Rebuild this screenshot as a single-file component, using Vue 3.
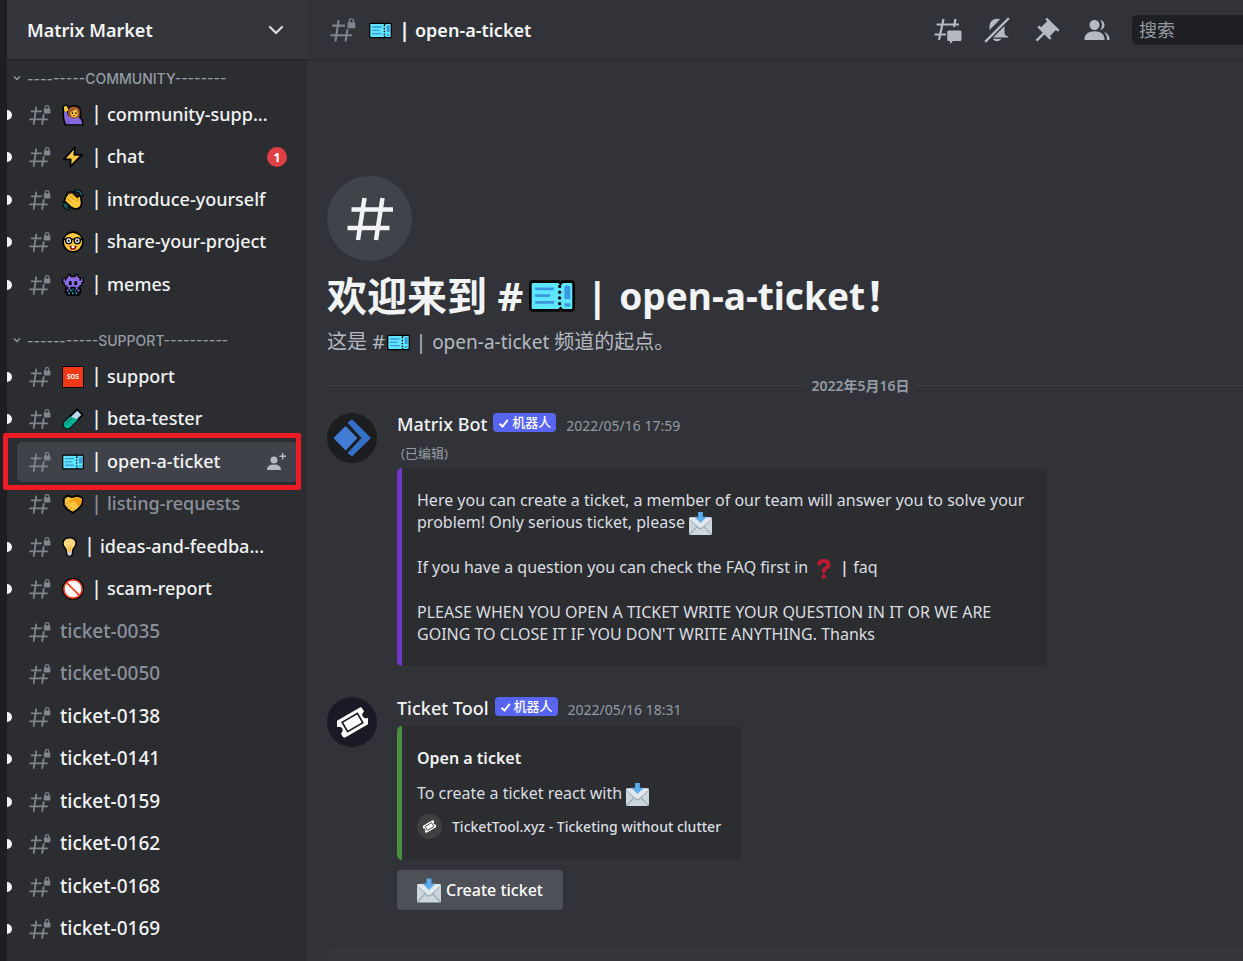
<script setup>
const community = [
  { name: 'community-supp...', emoji: 'raise', unread: true },
  { name: 'chat', emoji: 'bolt', unread: true, badge: 1 },
  { name: 'introduce-yourself', emoji: 'wave', unread: true },
  { name: 'share-your-project', emoji: 'nerd', unread: true },
  { name: 'memes', emoji: 'alien', unread: true },
]
const support = [
  { name: 'support', emoji: 'sos', unread: true },
  { name: 'beta-tester', emoji: 'tube', unread: true },
  { name: 'open-a-ticket', emoji: 'ticket', selected: true },
  { name: 'listing-requests', emoji: 'shake' },
  { name: 'ideas-and-feedba...', emoji: 'bulb', unread: true, narrow: true },
  { name: 'scam-report', emoji: 'ban', unread: true },
  { name: 'ticket-0035' },
  { name: 'ticket-0050' },
  { name: 'ticket-0138', unread: true },
  { name: 'ticket-0141', unread: true },
  { name: 'ticket-0159', unread: true },
  { name: 'ticket-0162', unread: true },
  { name: 'ticket-0168', unread: true },
  { name: 'ticket-0169', unread: true },
]
const groups = [
  { label: '---------COMMUNITY--------', channels: community },
  { label: '-----------SUPPORT----------', channels: support },
]
</script>

<template>
  <svg class="sprite" aria-hidden="true">
    <symbol id="hashlock" viewBox="0 0 22 22">
      <g fill="none" stroke="currentColor" stroke-width="1.8" stroke-linecap="round">
        <path d="M7.2 3.4 4.7 20M14.7 11 13.2 20M2.6 7.3H12M1 15.4H18" />
        <path d="M16.3 5V3.4a1.8 1.8 0 0 1 3.6 0V5" stroke-width="1.2" />
      </g>
      <rect x="14.8" y="4.4" width="6.6" height="5.2" rx="1" fill="currentColor" />
    </symbol>
    <symbol id="hash" viewBox="0 0 46 44">
      <path d="M17.500 1 11 43M35.500 1 29 43M4.500 12.500H46M.5 31H42.500" fill="none" stroke="currentColor" stroke-width="4.500" />
    </symbol>
    <symbol id="raise" viewBox="0 0 24 24">
      <g stroke="#000" stroke-width="3" stroke-linejoin="round">
        <path d="M6 10Q6 2.500 13 2.500T19.500 10V16H6Z" />
        <path d="M2 3 5 2 7 6 6 9 8 15 17 14Q22 16 22 22H4Q1 14 2 9Z" />
      </g>
      <path d="M6.500 10Q6 2.800 13 2.800T19.500 10L18.500 16H8Z" fill="#a0582b" />
      <path d="M2 3 5 2 7 6 5.500 8.500H2.500Z" fill="#ffc83d" />
      <path d="M2.200 8.500H5.500Q6 14 9 14.500L13 16 17 14.500Q22 16 22 22H4.500Q1.500 15 2.200 8.500Z" fill="#8767dc" />
      <path d="M9 9Q13 8.500 14.500 5.500 17 7 17.200 10 17 14 13 14.500 9 14 9 9Z" fill="#ffc83d" />
      <circle cx="11.300" cy="10" r=".9" /><circle cx="15" cy="10" r=".9" />
      <path d="M11.500 12.300Q13 13.700 14.700 12.300Z" />
      <path d="M7 18V22" stroke="#5e45a8" />
    </symbol>
    <symbol id="bolt" viewBox="0 0 24 24">
      <path d="M14 1.500 2 14.500H9.500L9 22.500 22 9.500H13.500Z" fill="#ffc83d" stroke="#000" stroke-width="2" stroke-linejoin="round" />
      <path d="M14 3.500 5 13.500 9 11Z" fill="#ffe075" />
    </symbol>
    <symbol id="wave" viewBox="0 0 24 24">
      <g fill="none" stroke="#000" stroke-width="3.500" stroke-linecap="round">
        <path d="M15 2Q20 2 21.500 7M2 15Q2 20 6.500 21.500" />
      </g>
      <path d="M4 8 6 6 5 5 7.500 3.500 9 4.500 11 3 17 9 18 7 20.500 8 21.500 16Q20 22 14 22L10 20 2.500 13Z" fill="#ffc83d" stroke="#000" stroke-width="2" stroke-linejoin="round" />
      <path d="M4 8.500 10 14M6.500 5.500 12.500 11.500M9.500 4.500 15 10M17.500 9 16 14" fill="none" stroke="#c98600" />
      <path d="M15 2Q20 2 21.500 7M2 15Q2 20 6.500 21.500M4 16Q4 18.500 6.500 19.500" fill="none" stroke="#1a8fa6" stroke-width="1.100" />
    </symbol>
    <symbol id="nerd" viewBox="0 0 24 24">
      <circle cx="12" cy="12" r="10.800" fill="#ffc83d" stroke="#000" stroke-width="1.800" />
      <path d="M1.500 9H22.500" stroke="#000" stroke-width="1.500" />
      <circle cx="7.300" cy="10.500" r="3.300" fill="#fff" stroke="#000" stroke-width="1.500" />
      <circle cx="16.700" cy="10.500" r="3.300" fill="#fff" stroke="#000" stroke-width="1.500" />
      <circle cx="7.300" cy="10.500" r="1.200" /><circle cx="16.700" cy="10.500" r="1.200" />
      <path d="M8 16H16Q15.500 20.800 12 20.800T8 16Z" fill="#7d1f10" />
      <path d="M10.500 16H13.500V18.500H10.500Z" fill="#fff" /><path d="M10 19.500Q12 18.500 14 19.500 12 21.500 10 19.500Z" fill="#f23c20" />
    </symbol>
    <symbol id="alien" viewBox="0 0 24 24">
      <path d="M6 0H10V2H14V0H18V3H20V4H24V10H22V13H20V16H21V21H19V24H5V21H3V16H4V13H2V10H0V4H4V3H6Z" />
      <path d="M7 1.500H9V3.500H15V1.500H17V4H19V7H21V5H22.500V9H21V12H19V14H5V12H3V9H1.500V5H3V7H5V4H7ZM5 17H7V19H5ZM17 17H19V19H17ZM7 14H9V17H7ZM15 14H17V17H15Z" fill="#8f6fe8" />
      <path d="M7.500 8H10.500V12H7.500ZM13.500 8H16.500V12H13.500Z" />
      <path d="M9 17H10.500V19H9ZM11.500 15.500H12.500V18H11.500ZM14 17H15V19H14ZM7 20H8.500V22H7ZM11 20H12.500V22H11ZM15 20H16.500V22H15Z" fill="#26b9d5" />
    </symbol>
    <symbol id="sos" viewBox="0 0 24 24">
      <rect x=".5" y=".5" width="23" height="23" fill="#f03a17" stroke="#000" />
      <text x="12" y="14.500" font-size="7" font-weight="700" fill="#fff" text-anchor="middle" font-family="Noto Sans, sans-serif">SOS</text>
    </symbol>
    <symbol id="tube" viewBox="0 0 24 24">
      <path d="M15 3 16.500 1.500 22.500 7.500 21 9 8.500 21.500Q5.500 23.500 3 21T2.500 15.500Z" fill="#b8d9f0" stroke="#000" stroke-width="2" stroke-linejoin="round" />
      <path d="M8.500 9.500 2.500 15.500Q.8 18.500 3 21T8.500 21.500L17.500 12.500 13 11Z" fill="#00b294" />
      <path d="M5 17 11 11" stroke="#007f69" stroke-width="1.500" />
    </symbol>
    <symbol id="ticket" viewBox="0 0 24 24">
      <path d="M2 4.500H15.500L16.500 5.500 17.500 4.500H22Q23.300 4.500 23.300 6V18Q23.300 19.500 22 19.500H17.500L16.500 18.500 15.500 19.500H2Q.7 19.500.7 18V6Q.7 4.500 2 4.500Z" fill="#5fe6ff" stroke="#000" stroke-width="1.400" />
      <path d="M3.800 8.300H12.500M3.800 11.800H10.500M3.800 15.300H12.500" stroke="#3a96dd" stroke-width="1.400" stroke-linecap="round" />
      <path d="M16 7V18" stroke="#000" stroke-width="1.700" stroke-linecap="round" stroke-dasharray="0 3" />
      <path d="M18.500 7.500Q18.500 6.500 20 6.500T21.500 7.500V13.500H18.500ZM18.500 15.800H21.500V17.500H18.500Z" fill="#3a96dd" />
    </symbol>
    <symbol id="shake" viewBox="0 0 24 24">
      <path d="M2 6 6 3 11 4.500 17 3 22.500 6 21.500 13 17 18 12 21.500 6 18 2 13Z" fill="#ffc83d" stroke="#000" stroke-width="2" stroke-linejoin="round" />
      <path d="M16 4 22 6 21 12 18 14 12.500 8.500 9 11 7.500 9.500 12 5.500ZM2.500 12 5 10 13 18 12 20.500Z" fill="#f0a012" />
      <path d="M5 14 7 12M7.500 16.500 9.500 14.500M10 19 12 17" stroke="#ffd96b" stroke-width="1.500" />
    </symbol>
    <symbol id="bulb" viewBox="0 0 17 24">
      <path d="M5 17Q5 14.500 3 12.500Q1 10.500 1 7.800Q1.500 1.500 8.500 1.500T16 7.800Q16 10.500 14 12.500 12 14.500 12 17L11 21.500Q8.500 23.500 6 21.500Z" fill="#ffd67d" stroke="#000" stroke-width="1.700" />
      <path d="M7 11 8 17M10 11 9 17" stroke="#f5a623" /><path d="M6 17.500H11.200L10.500 21Q8.500 22.500 6.500 21Z" fill="#c8ccd1" />
    </symbol>
    <symbol id="ban" viewBox="0 0 24 24">
      <circle cx="12" cy="12" r="12" /><circle cx="12" cy="12" r="10" fill="#fff" stroke="#f23c20" stroke-width="1.800" />
      <path d="M5 5 19 19" stroke="#f23c20" stroke-width="1.800" />
    </symbol>
    <symbol id="mail" viewBox="0 0 24 24">
      <rect x="0" y="6" width="24" height="18" rx="1.500" fill="#ccd6dd" />
      <path d="M1 23 9 14.500M23 23 15 14.500" stroke="#99aab5" stroke-width="1.200" />
      <path d="M0 7Q0 6 1.500 6H22.500Q24 6 24 7.500L14 17.500Q12 19 10 17.500L0 7.500Z" fill="#99aab5" />
      <path d="M0 6.800Q.3 5.500 1.500 5.500H22.500Q23.700 5.500 24 6.800L13.800 16Q12 17.400 10.200 16Z" fill="#e1e8ed" />
      <path d="M9.500 0H14.500V5H18.500L12 11.500 5.500 5H9.500Z" fill="#5dadec" />
    </symbol>
    <symbol id="question" viewBox="0 0 24 24">
      <path d="M7.500 7Q8 4 12.500 4T17.300 7.800Q17.300 10 14.500 11.700 12.300 13 12.300 15" fill="none" stroke="#be1931" stroke-width="4" stroke-linecap="round" />
      <circle cx="12.300" cy="20.500" r="2.300" fill="#be1931" />
    </symbol>
    <symbol id="stub" viewBox="0 0 30 30">
      <g transform="rotate(-30 15 15)">
        <path d="M2 6H28Q30 6 30 8V11.500Q26.500 12 26.500 15T30 18.500V22Q30 24 28 24H2Q0 24 0 22V18.500Q3.500 18 3.500 15T0 11.500V8Q0 6 2 6Z" fill="#fff" />
        <rect x="6.500" y="9.800" width="17" height="10.400" fill="none" stroke="#1a1a26" stroke-width="1.600" />
      </g>
    </symbol>
    <symbol id="check" viewBox="0 0 16 16">
      <path d="M3.500 8.800 6.500 11.500 11.800 4.800" fill="none" stroke="#fff" stroke-width="2" />
    </symbol>
  </svg>

  <div class="app">
    <div class="servers"></div>
    <nav class="sidebar" aria-label="Matrix Market">
      <button class="guild">
        <span>Matrix Market</span>
        <svg width="18" height="18" viewBox="0 0 18 18"><path d="M3 6 9 12 15 6" fill="none" stroke="currentColor" stroke-width="2.200" stroke-linecap="round" /></svg>
      </button>
      <section v-for="g in groups" :key="g.label" class="group">
        <h2 class="category">
          <svg width="10" height="10" viewBox="0 0 10 10"><path d="M2 3.500 5 6.500 8 3.500" fill="none" stroke="currentColor" stroke-width="1.400" /></svg>
          <span>{{ g.label }}</span>
        </h2>
        <ul class="channels">
          <li v-for="c in g.channels" :key="c.name" class="row" :class="{ unread: c.unread, selected: c.selected }">
            <a href="#" class="channel" :class="{ plain: !c.emoji }">
              <svg class="lock"><use href="#hashlock" /></svg>
              <svg v-if="c.emoji" class="emoji" :class="{ narrow: c.narrow }"><use :href="'#' + c.emoji" /></svg>
              <span v-if="c.emoji" class="bar">|</span>
              <span class="name">{{ c.name }}</span>
              <span v-if="c.badge" class="badge">{{ c.badge }}</span>
              <svg v-if="c.selected" class="invite" viewBox="0 0 20 18">
                <circle cx="7" cy="7" r="3.500" fill="currentColor" />
                <path d="M0 17Q0 11.500 7 11.500T14 17ZM15 0H16.400V2.600H19V4H16.400V6.600H15V4H12.400V2.600H15Z" fill="currentColor" />
              </svg>
            </a>
          </li>
        </ul>
      </section>
    </nav>

    <main class="main">
      <header class="topbar">
        <svg class="lock"><use href="#hashlock" /></svg>
        <svg class="emoji"><use href="#ticket" /></svg>
        <span class="bar">|</span>
        <h1>open-a-ticket</h1>
        <div class="tools">
          <button aria-label="Threads">
            <svg viewBox="0 0 30 30">
              <path d="M11.500 4 7 25M23.500 4 22 12M4.500 9.500H27M2.500 19.500H14" fill="none" stroke="currentColor" stroke-width="2.200" />
              <path d="M16.500 15.500H28Q29.500 15.500 29.500 17V24.500Q29.500 26 28 26H21L18 29V26H16.500Q15.200 26 15.200 24.500V17Q15.200 15.500 16.500 15.500Z" fill="currentColor" />
            </svg>
          </button>
          <button aria-label="Notifications">
            <svg viewBox="0 0 24 24">
              <path d="M18 9V14C18 15.657 19.344 17 21 17V18H3V17C4.656 17 6 15.657 6 14V9C6 5.686 8.686 3 12 3C15.314 3 18 5.686 18 9ZM12 21C10.524 21 9.248 20.190 8.555 19H15.445C14.752 20.190 13.476 21 12 21Z" fill="currentColor" />
              <path d="M1 20.500 20.500 1" stroke="#313338" stroke-width="5" />
              <path d="M2.500 21.500 21.500 2.500" stroke="#313338" stroke-width="4" />
              <path d="M2.500 21.500 21.500 2.500" stroke="currentColor" stroke-width="1.800" />
            </svg>
          </button>
          <button aria-label="Pinned messages">
            <svg viewBox="0 0 24 24"><path fill="currentColor" d="M22 12L12.101 2.101 10.686 3.514 12.101 4.929 7.151 9.878 5.736 8.465 4.322 9.880 8.565 14.122 2.908 19.778 4.322 21.192 9.979 15.536 14.222 19.778 15.636 18.364 14.222 16.950 19.171 12 20.586 13.414Z" /></svg>
          </button>
          <button aria-label="Members">
            <svg viewBox="0 0 24 24" fill="currentColor">
              <path d="M14 8.006C14 10.211 12.206 12.006 10 12.006C7.795 12.006 6 10.211 6 8.006C6 5.801 7.794 4.006 10 4.006C12.206 4.006 14 5.801 14 8.006ZM2 19.006C2 15.473 5.290 13.006 10 13.006C14.711 13.006 18 15.473 18 19.006V20.006H2V19.006Z" />
              <path d="M20 20.006H22V19.006C22 16.443 20.270 14.441 17.521 13.535C19.062 14.913 20 16.806 20 19.006V20.006Z" />
              <path d="M14.883 11.908C16.666 11.504 18 9.908 18 8.006C18 5.969 16.469 4.282 14.497 4.037C15.432 5.095 16 6.485 16 8.006C16 9.449 15.489 10.774 14.638 11.810Z" />
            </svg>
          </button>
        </div>
        <input class="search" type="text" placeholder="搜索" aria-label="搜索" />
      </header>

      <div class="content">
        <div class="disc"><svg><use href="#hash" /></svg></div>
        <h2 class="welcome">欢迎来到 #<svg class="emoji"><use href="#ticket" /></svg><span class="bar">|</span><span class="latin">open-a-ticket</span>！</h2>
        <p class="intro">这是 #<svg class="emoji"><use href="#ticket" /></svg><span class="bar">|</span><span class="latin">open-a-ticket </span>频道的起点。</p>
        <div class="divider"><time>2022年5月16日</time></div>

        <article class="message">
          <svg class="avatar" viewBox="0 0 50 50">
            <circle cx="25" cy="25" r="25" fill="#1c1d1e" />
            <path d="M18.600 14 29.400 25 18.600 36.500 7.500 25Z" fill="#437cd4" stroke="#437cd4" stroke-width="1.500" stroke-linejoin="round" />
            <path d="M21.500 9.700 25 7.300 43 25 25 42.500 21.500 40 35.500 25Z" fill="#346fc8" stroke="#346fc8" stroke-width="1.500" stroke-linejoin="round" />
          </svg>
          <div class="body">
            <header class="meta">
              <h3>Matrix Bot</h3>
              <span class="tag"><svg><use href="#check" /></svg>机器人</span>
              <time>2022/05/16 17:59</time>
            </header>
            <div class="edited">(已编辑)</div>
            <div class="embed purple">
              <p>Here you can create a ticket, a member of our team will answer you to solve your problem! Only serious ticket, please <svg class="emoji"><use href="#mail" /></svg></p>
              <p>If you have a question you can check the FAQ first in <svg class="emoji"><use href="#question" /></svg><span class="bar">|</span>faq</p>
              <p>PLEASE WHEN YOU OPEN A TICKET WRITE YOUR QUESTION IN IT OR WE ARE GOING TO CLOSE IT IF YOU DON'T WRITE ANYTHING. Thanks</p>
            </div>
          </div>
        </article>

        <article class="message">
          <svg class="avatar" viewBox="0 0 50 50">
            <circle cx="25" cy="25" r="25" fill="#1a1a26" />
            <use href="#stub" x="10" y="10" width="31" height="31" />
          </svg>
          <div class="body">
            <header class="meta">
              <h3>Ticket Tool</h3>
              <span class="tag"><svg><use href="#check" /></svg>机器人</span>
              <time>2022/05/16 18:31</time>
            </header>
            <div class="embed green">
              <h4>Open a ticket</h4>
              <p>To create a ticket react with <svg class="emoji"><use href="#mail" /></svg></p>
              <footer>
                <svg viewBox="0 0 25 25"><circle cx="12.500" cy="12.500" r="12.500" fill="#404040" /><use href="#stub" x="6" y="6" width="13" height="13" /></svg>
                <span>TicketTool.xyz - Ticketing without clutter</span>
              </footer>
            </div>
            <button class="create"><svg><use href="#mail" /></svg>Create ticket</button>
          </div>
        </article>
      </div>
      <div class="composer"></div>
    </main>
  </div>
</template>

<style>
body {
  background: #313338;
}
</style>

<style scoped>
.sprite {
  display: none;
}
.app {
  display: flex;
  height: 100vh;
  overflow: hidden;
  background: #313338;
  color: #f2f3f5;
  font-family: "Noto Sans", "Noto Sans CJK SC", sans-serif;
}
h1, h2, h3, h4, p, ul {
  margin: 0;
  padding: 0;
}
button {
  font: inherit;
  color: inherit;
  border: 0;
  padding: 0;
  background: none;
}
svg {
  flex: none;
}
.servers {
  flex: none;
  width: 7px;
  background: #1e1f22;
}
.sidebar {
  flex: none;
  width: 300px;
  background: #2b2d31;
}
.guild {
  display: flex;
  align-items: center;
  justify-content: space-between;
  box-sizing: border-box;
  width: 100%;
  height: 60px;
  padding: 0 22px 0 20px;
  background: #35363c;
  border-bottom: 1px solid #232428;
  font-size: 18px;
  font-weight: 600;
}
.guild svg {
  color: #dbdee1;
}
.category {
  display: flex;
  align-items: center;
  gap: 5px;
  height: 30px;
  padding: 3px 0 0 5px;
  color: #949ba4;
  font-family: Inter, sans-serif;
  font-size: 14px;
  font-weight: 500;
}
.group + .group .category {
  padding-top: 19px;
}
.channels {
  list-style: none;
}
.row {
  position: relative;
  display: flex;
  align-items: center;
  height: 42px;
}
.row:nth-child(odd) {
  height: 43px;
}
.unread::before {
  content: "";
  position: absolute;
  left: 0;
  width: 5px;
  height: 10px;
  border-radius: 0 5px 5px 0;
  background: #f2f3f5;
}
.channel {
  flex: 1;
  display: flex;
  align-items: center;
  height: 40px;
  margin: 0 10px;
  padding: 0 10px 0 12px;
  border-radius: 5px;
  color: #8b919b;
  font-size: 18px;
  font-weight: 500;
  text-decoration: none;
}
.plain {
  font-size: 19px;
}
.lock {
  width: 22px;
  height: 22px;
  margin-right: 9px;
  color: #80848e;
}
.channel .emoji {
  width: 22px;
  height: 22px;
  margin-left: 2px;
}
.channel .narrow {
  width: 15px;
}
.channel .bar {
  box-sizing: border-box;
  width: 23px;
  padding: 0 0 3px 2px;
  font-size: 20px;
  line-height: 24px;
  text-align: center;
}
.name {
  flex: 1;
  padding-bottom: 2px;
  white-space: nowrap;
}
.unread .name, .unread .bar, .selected .name, .selected .bar {
  color: #f2f3f5;
}
.selected .channel {
  background: #404249;
}
.selected::after {
  content: "";
  position: absolute;
  inset: -7px 6px -7px -4px;
  border: 5px solid #ed1c24;
  border-radius: 2px;
}
.badge {
  width: 20px;
  border-radius: 10px;
  background: #e04045;
  color: #fff;
  font-size: 13px;
  font-weight: 700;
  line-height: 20px;
  text-align: center;
}
.invite {
  width: 20px;
  height: 18px;
  color: #b5bac1;
}
.main {
  flex: 1;
  min-width: 0;
  display: flex;
  flex-direction: column;
}
.topbar {
  display: flex;
  align-items: center;
  height: 60px;
  padding-left: 23px;
  border-bottom: 1px solid #27282c;
}
.topbar .lock {
  width: 26px;
  height: 26px;
  margin-right: 13px;
}
.topbar .emoji {
  width: 23px;
  height: 23px;
}
.topbar .bar {
  box-sizing: border-box;
  width: 23px;
  padding: 0 0 2px 2px;
  text-align: center;
  font-size: 20px;
  font-weight: 700;
}
.topbar h1 {
  font-size: 18px;
  font-weight: 600;
}
.tools {
  display: flex;
  gap: 20px;
  margin-left: auto;
  margin-right: 20px;
  color: #b5bac1;
}
.tools button, .tools svg {
  display: block;
  width: 30px;
  height: 30px;
}
.search {
  box-sizing: border-box;
  width: 111px;
  height: 30px;
  padding: 0 7px;
  border: 0;
  border-radius: 5px 0 0 5px;
  background: #1e1f22;
  color: #dbdee1;
  font: 18px "Noto Sans", "Noto Sans CJK SC", sans-serif;
}
.search::placeholder {
  color: #949ba4;
}
.content {
  flex: 1;
  min-height: 0;
  padding: 115px 0 0 20px;
}
.disc {
  display: grid;
  place-items: center;
  width: 85px;
  height: 85px;
  border-radius: 50%;
  background: #41434a;
}
.disc svg {
  width: 46px;
  height: 44px;
}
.welcome {
  display: flex;
  align-items: center;
  height: 50px;
  margin-top: 10px;
  font-size: 40px;
  font-weight: 700;
  line-height: 50px;
  white-space: pre;
}
.welcome .emoji {
  width: 46px;
  height: 46px;
  margin-left: 6px;
}
.welcome .bar {
  width: 44px;
  text-align: center;
}
.welcome .latin {
  font-size: 37px;
}
.intro {
  display: flex;
  align-items: center;
  height: 22px;
  margin-top: 10px;
  color: #b5bac1;
  font-size: 20px;
  line-height: 22px;
  white-space: pre;
}
.intro .emoji {
  width: 23px;
  height: 23px;
  margin-left: 2px;
}
.intro .bar {
  width: 22px;
  text-align: center;
}
.intro .latin {
  font-size: 19px;
}
.divider {
  display: flex;
  align-items: center;
  gap: 6px;
  height: 20px;
  margin-top: 22px;
  color: #949ba4;
  font-size: 14px;
  font-weight: 600;
}
.divider::before, .divider::after {
  content: "";
  flex: 19;
  height: 1px;
  background: #3f4147;
}
.divider::after {
  flex: 13;
}
.message {
  display: flex;
  align-items: flex-start;
  gap: 20px;
  margin-top: 18px;
}
.message + .message {
  margin-top: 31px;
}
.avatar {
  width: 50px;
  height: 50px;
}
.body {
  flex: 1;
  min-width: 0;
}
.meta {
  display: flex;
  align-items: center;
  height: 22px;
}
.meta h3 {
  font-size: 18px;
  font-weight: 500;
}
.tag {
  display: flex;
  align-items: center;
  height: 19px;
  margin: 0 10px 3px 6px;
  padding: 0 5px 0 3px;
  border-radius: 4px;
  background: #5865f2;
  color: #fff;
  font-size: 13px;
  font-weight: 500;
  line-height: 19px;
}
.tag svg {
  width: 16px;
  height: 16px;
}
.meta time {
  padding-top: 3px;
  color: #949ba4;
  font-size: 14px;
}
.edited {
  height: 33px;
  padding-left: 4px;
  color: #949ba4;
  font-size: 13px;
  line-height: 36px;
}
.embed {
  box-sizing: border-box;
  width: fit-content;
  max-width: 650px;
  padding: 21px 20px 21px 15px;
  border-left: 5px solid;
  border-radius: 5px;
  background: #2b2d31;
}
.purple {
  border-color: #7137c8;
}
.green {
  margin-top: 7px;
  border-color: #4a8f3f;
}
.embed p {
  color: #dbdee1;
  font-size: 16px;
  line-height: 22px;
}
.embed p + p {
  margin-top: 23px;
}
.embed .emoji {
  width: 23px;
  height: 23px;
  margin: -4px 0;
  vertical-align: middle;
}
.embed .bar {
  display: inline-block;
  width: 18px;
  font-weight: 600;
  text-align: center;
}
.embed h4 {
  margin-bottom: 13px;
  font-size: 16px;
  font-weight: 600;
  line-height: 22px;
}
.embed footer {
  display: flex;
  align-items: center;
  gap: 10px;
  height: 25px;
  margin-top: 10px;
  color: #dbdee1;
  font-size: 14px;
  font-weight: 500;
}
.embed footer svg {
  width: 25px;
  height: 25px;
}
.create {
  display: flex;
  align-items: center;
  gap: 5px;
  height: 40px;
  margin-top: 10px;
  padding: 0 20px;
  border-radius: 4px;
  background: #4e5058;
  color: #fff;
  font-size: 16px;
  font-weight: 500;
}
.create svg {
  width: 24px;
  height: 25px;
}
.composer {
  flex: none;
  height: 14px;
  margin-left: 20px;
  border-radius: 10px 0 0 0;
  background: #36373d;
}
</style>
